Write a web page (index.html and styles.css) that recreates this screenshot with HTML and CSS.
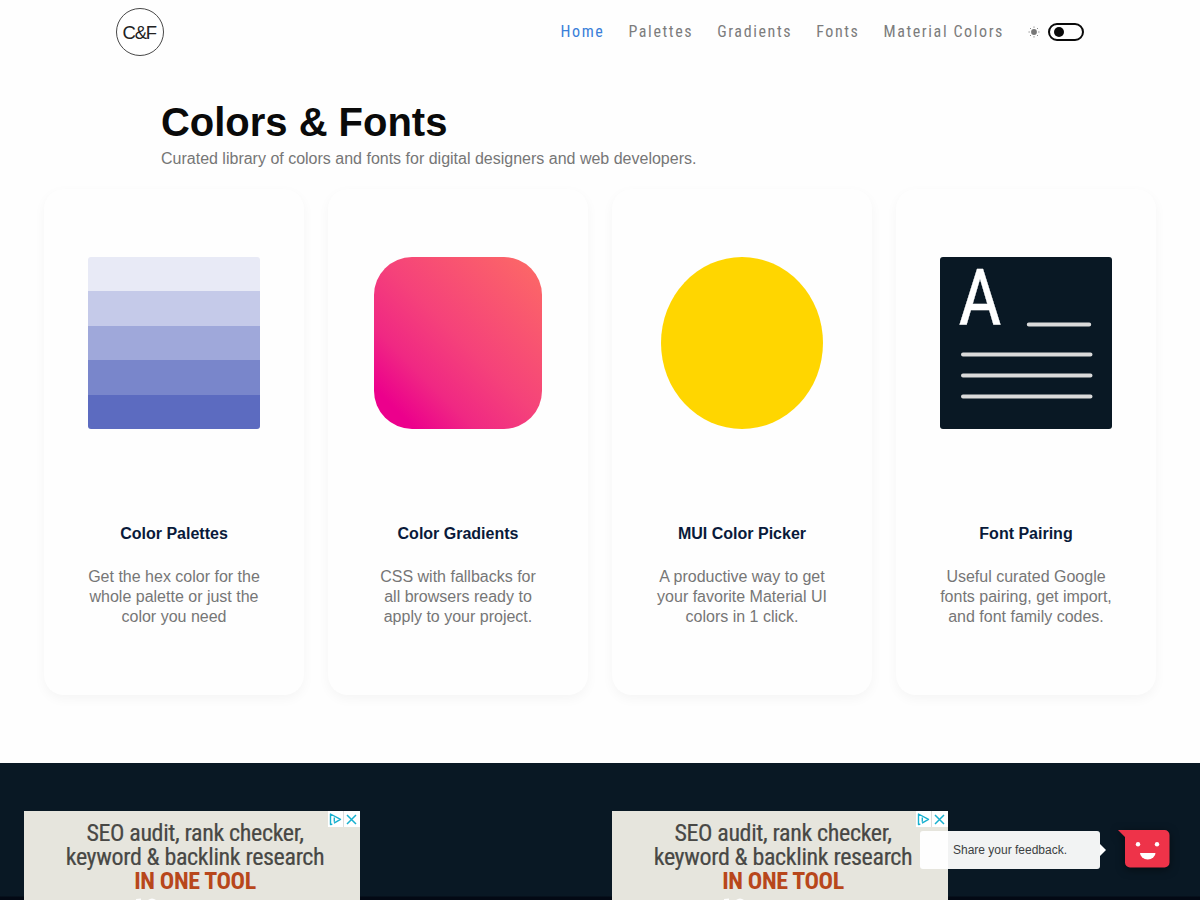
FILE: index.html
```html
<!DOCTYPE html>
<html lang="en">
<head>
<meta charset="utf-8">
<title>Colors &amp; Fonts</title>
<link rel="stylesheet" href="styles.css">
</head>
<body>
<header class="header">
  <a class="logo"><svg width="48" height="48" viewBox="0 0 48 48"><circle cx="24" cy="24" r="23.5" fill="#fff" stroke="#333" stroke-width=".9"/><text x="6.500" y="30.800" class="logo-text">C&amp;F</text></svg></a>
  <nav class="nav">
    <a class="active">Home</a><a>Palettes</a><a>Gradients</a><a>Fonts</a><a>Material Colors</a>
    <svg class="sun" width="12" height="12" viewBox="0 0 12 12"><circle cx="6" cy="6" r="2.9" fill="#777"/><g stroke="#888" stroke-width="1" stroke-linecap="round"><path d="M6 .9v.5M6 10.6v.5M.9 6h.5M10.6 6h.5M2.3 2.3l.4.4M9.3 9.3l.4.4M2.3 9.7l.4-.4M9.3 2.7l.4-.4"/></g></svg>
    <span class="toggle"><i></i></span>
  </nav>
</header>
<main>
  <div class="hero"><h1>Colors &amp; Fonts</h1><p>Curated library of colors and fonts for digital designers and web developers.</p></div>
  <section class="cards">
    <article class="card">
      <div class="art swatches"><i class="s1"></i><i class="s2"></i><i class="s3"></i><i class="s4"></i><i class="s5"></i></div>
      <h2>Color Palettes</h2><p>Get the hex color for the<br>whole palette or just the<br>color you need</p>
    </article>
    <article class="card">
      <div class="art gradient"></div>
      <h2>Color Gradients</h2><p>CSS with fallbacks for<br>all browsers ready to<br>apply to your project.</p>
    </article>
    <article class="card">
      <div class="art circle"></div>
      <h2>MUI Color Picker</h2><p>A productive way to get<br>your favorite Material UI<br>colors in 1 click.</p>
    </article>
    <article class="card">
      <svg class="art" width="172" height="172" viewBox="0 0 172 172"><rect width="172" height="172" rx="3" fill="#091824"/><text class="letter" x="18" y="68" textLength="44" lengthAdjust="spacingAndGlyphs">A</text><path d="M88.800 67.500h60.400M23 97.500h127.500M23 118.500h127.500M23 139.500h127.500" stroke="#dadada" stroke-width="4" stroke-linecap="round"/></svg>
      <h2>Font Pairing</h2><p>Useful curated Google<br>fonts pairing, get import,<br>and font family codes.</p>
    </article>
  </section>
</main>
<section class="ads">
  <div class="ad">
    <div class="ad-copy">SEO audit, rank checker,<br>keyword &amp; backlink research<br><b>IN ONE TOOL</b></div>
    <svg class="adchoices" width="32" height="16" viewBox="0 0 32 16"><path d="M0 0h32v16H0z" fill="#fff"/><path d="M15.500 0v16" stroke="#ddd"/><path d="M4.300 13.300L2.500 13.500V3l10 5.300-6.500 3.800M6.300 6.500v4.300" fill="none" stroke="#18b0cf" stroke-width="1.400" stroke-linejoin="round"/><path d="M19 4l9 9M28 4l-9 9" stroke="#18b0cf" stroke-width="1.500"/></svg>
    <svg class="ad-mark" width="24" height="3" viewBox="0 0 24 3"><path d="M0 3V2L5 1.500v1.500zM12 3q4-3 8 0z" fill="#fff"/></svg>
  </div>
  <div class="ad">
    <div class="ad-copy">SEO audit, rank checker,<br>keyword &amp; backlink research<br><b>IN ONE TOOL</b></div>
    <svg class="adchoices" width="32" height="16" viewBox="0 0 32 16"><path d="M0 0h32v16H0z" fill="#fff"/><path d="M15.500 0v16" stroke="#ddd"/><path d="M4.300 13.300L2.500 13.500V3l10 5.300-6.500 3.800M6.300 6.500v4.300" fill="none" stroke="#18b0cf" stroke-width="1.400" stroke-linejoin="round"/><path d="M19 4l9 9M28 4l-9 9" stroke="#18b0cf" stroke-width="1.500"/></svg>
    <svg class="ad-mark" width="24" height="3" viewBox="0 0 24 3"><path d="M0 3V2L5 1.500v1.500zM12 3q4-3 8 0z" fill="#fff"/></svg>
  </div>
</section>
<aside class="feedback">
  <div class="bubble">Share your feedback.</div>
  <svg class="face" width="52" height="38" viewBox="0 0 52 38"><path d="M0 0h46.500a5 5 0 0 1 5 5v27.500a5 5 0 0 1-5 5h-34.500a5 5 0 0 1-5-5V7z" fill="#ee3349"/><circle cx="20" cy="14.200" r="2.200" fill="#fff"/><circle cx="39" cy="14.200" r="2.200" fill="#fff"/><path d="M22 23h15.500a7.750 6.500 0 0 1-15.500 0z" fill="#fff"/></svg>
</aside>
</body>
</html>
```
FILE: styles.css
```css
* { box-sizing: border-box; }
body { margin: 0; height: 900px; overflow: hidden; position: relative; display: flex; flex-direction: column; background: #fefefe; font-family: "Liberation Sans", Arial, sans-serif; color: #767676; }
h1, h2, p { margin: 0; }
.header { height: 64px; padding: 0 116px; display: flex; justify-content: space-between; align-items: center; }
.logo { height: 48px; }
.logo-text { font: 18.500px "Liberation Sans", Arial, sans-serif; letter-spacing: -1.200px; fill: #222; }
.nav { display: flex; align-items: center; gap: 24px; font-family: "Roboto Condensed", Roboto, sans-serif; font-stretch: 75%; font-size: 16px; letter-spacing: 1.600px; color: #7c7c7c; white-space: nowrap; }
.nav a { margin-top: -1px; }
.nav .active { color: #3a7fd9; }
.toggle { width: 36px; height: 18px; margin-left: -16px; border: 2px solid #0a0a0a; border-radius: 9px; display: flex; align-items: center; padding-left: 4px; }
.toggle i { width: 10px; height: 10px; border-radius: 50%; background: #0a0a0a; }
.hero { padding: 34px 161px 0; height: 125px; }
.hero h1 { font-size: 40px; line-height: 48px; letter-spacing: -.020px; color: #0a0a0a; }
.hero p { font-size: 16px; line-height: 20px; padding-top: 3px; }
.cards { display: grid; grid-template-columns: repeat(4, 260px); gap: 24px; padding: 0 44px; height: 574px; align-items: start; }
.card { height: 506px; border-radius: 20px; padding-top: 68px; display: flex; flex-direction: column; align-items: center; text-align: center; background: #fefefe; box-shadow: 0 4px 12px rgba(0, 0, 0, .04); }
.art { height: 172px; width: 172px; flex: none; }
.swatches { border-radius: 3px; overflow: hidden; display: grid; grid-template-rows: repeat(5, 1fr); }
.s1 { background: #e8eaf6; }
.s2 { background: #c5cae9; }
.s3 { background: #9fa8da; }
.s4 { background: #7986cb; }
.s5 { background: #5c6bc0; }
.gradient { width: 168px; border-radius: 38px; background: linear-gradient(45deg, #ec008c 12%, #f02883 30%, #f5427a 52%, #fc6767 95%); }
.circle { width: 162px; border-radius: 50%; background: #ffd600; }
.letter { font: 78.700px "Roboto Condensed", Roboto, sans-serif; font-stretch: 75%; fill: #fff; stroke: #fff; stroke-width: .3px; }
.card h2 { margin-top: 95px; font-size: 16px; line-height: 20px; color: #091a3a; }
.card p { margin-top: 23px; font-size: 16px; line-height: 20px; }
.ads { flex: 1; display: grid; grid-template-columns: 1fr 1fr; padding: 48px 0 0 24px; background: linear-gradient(#091824 133px, #030914 134px); }
.ad { position: relative; width: 336px; height: 89px; background: #e6e5dd; overflow: hidden; }
.ad-copy { padding: 10px 0 0 6px; text-align: center; white-space: nowrap; font: 24px/24px "Roboto Condensed", Roboto, sans-serif; font-stretch: 75%; letter-spacing: -.360px; color: #484845; -webkit-text-stroke: .2px; }
.ad-copy b { color: #b8471b; -webkit-text-stroke: 0; }
.adchoices { position: absolute; right: 0; top: 0; }
.ad-mark { position: absolute; left: 112px; bottom: 0; }
.feedback { position: absolute; left: 920px; top: 830px; display: flex; }
.bubble { position: relative; width: 180px; height: 38px; margin-top: 1px; margin-right: 18px; border-radius: 3px; background: rgba(255, 255, 255, .95); color: #3c3f42; font-size: 12px; line-height: 38px; text-align: center; }
.bubble::after { content: ""; position: absolute; left: 180px; top: 13px; border: 6px solid transparent; border-left-color: #fff; border-right: 0; }
.face { filter: drop-shadow(0 2px 4px rgba(0, 0, 0, .5)); overflow: visible; }
```
